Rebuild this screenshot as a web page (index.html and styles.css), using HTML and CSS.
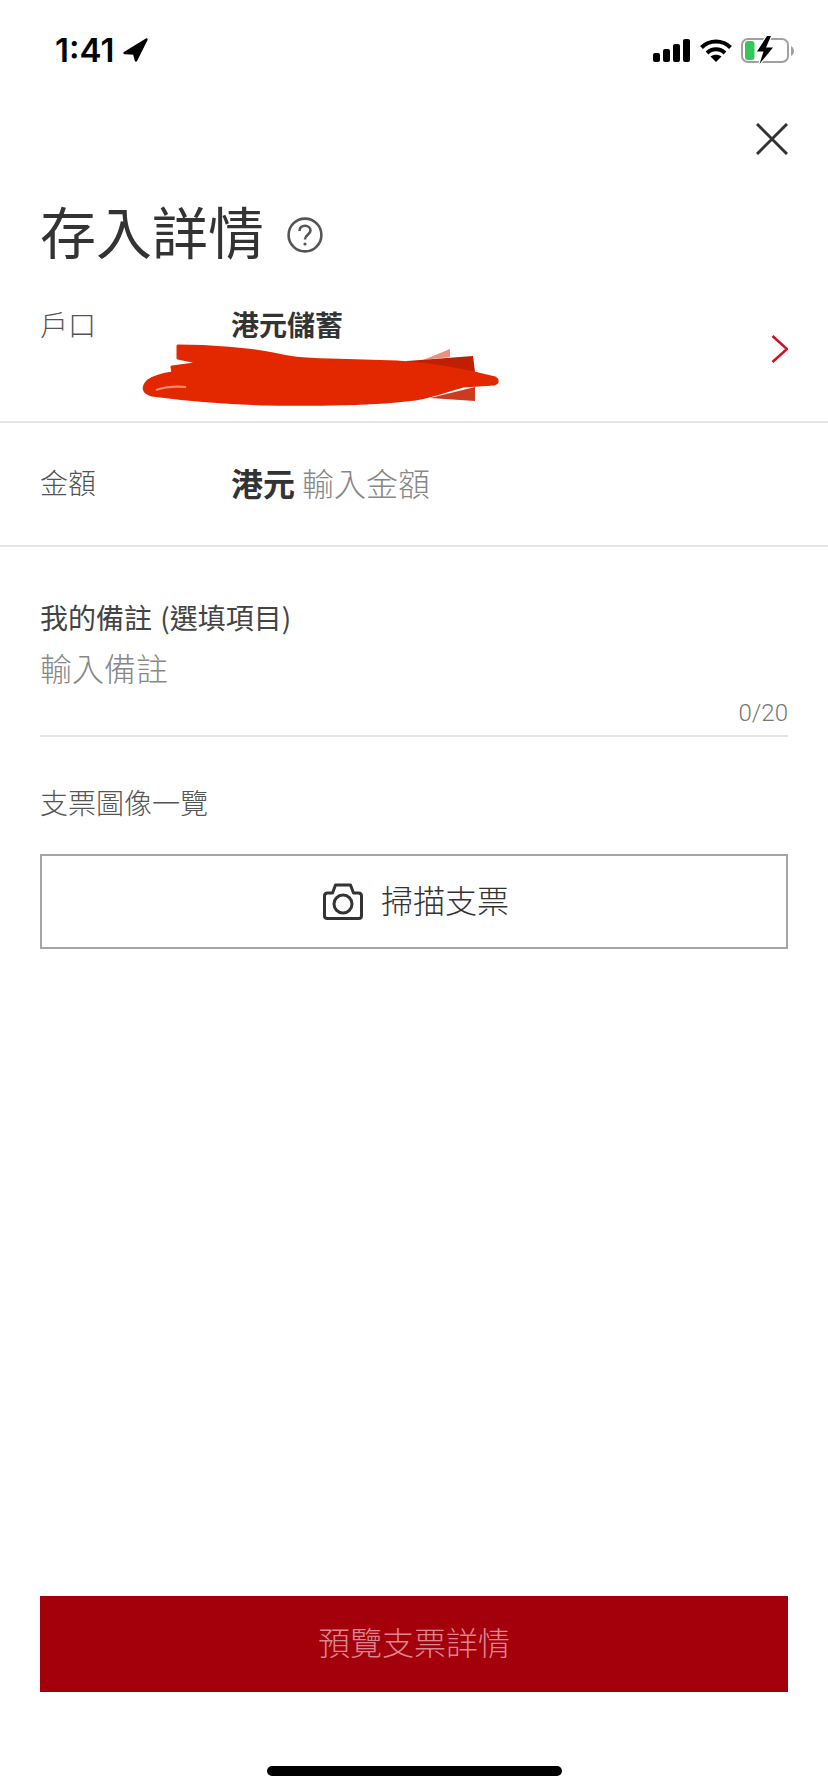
FILE: index.html
```html
<!DOCTYPE html>
<html>
<head>
    <title>存入詳情</title>
    <link rel="stylesheet" href="styles.css">
</head>
<body>
    <div class="page">
        <div class="status">
            <div class="clock">
                <span>1:41</span>
                <svg class="arrow" width="25" height="24" viewBox="0 0 25 24"><path d="M23.5 1.5 L13 22.5 L11 15.5 L1.5 15 Z" stroke="#000" stroke-width="2.4" stroke-linejoin="round"/></svg>
            </div>
            <div class="status-icons">
                <div class="signal"><i class="b1"></i><i class="b2"></i><i class="b3"></i><i class="b4"></i></div>
                <svg width="32" height="23" viewBox="0 0 32 23" fill="none" stroke="#000" stroke-width="4">
                    <path d="M1.5 8.5 C9.5 .5 22.5 .5 30.5 8.5"/>
                    <path d="M7 14 C12 9 20 9 25 14"/>
                    <path d="M16 23 L10.5 17.5 C13.5 15 18.5 15 21.5 17.5 Z" fill="#000" stroke="none"/>
                </svg>
                <svg width="53" height="28" viewBox="0 0 53 28">
                    <rect x="1" y="3" width="46" height="23" rx="6" fill="none" stroke="#a0a0a0" stroke-width="2"/>
                    <path d="M50 10 C52 11 53 13 53 15 C53 17 52 19 50 20 Z" fill="#a0a0a0"/>
                    <rect x="4" y="5" width="9.5" height="19" rx="3" fill="#34c759"/>
                    <path d="M26 0 L16 15.5 H22.5 L18.5 28 L32 11.5 H25 L30 0 Z" fill="#fff" stroke="#fff" stroke-width="2.5"/>
                    <path d="M26 0 L16 15.5 H22.5 L18.5 28 L32 11.5 H25 L30 0 Z" fill="#000"/>
                </svg>
            </div>
        </div>

        <div class="close-row">
            <svg width="32" height="32" viewBox="0 0 32 32" stroke="#333" stroke-width="3"><path d="M1 1 L31 31 M31 1 L1 31"/></svg>
        </div>

        <div class="title-row">
            <h1>存入詳情</h1>
            <svg class="help" width="36" height="36" viewBox="0 0 36 36" fill="none" stroke="#555" stroke-width="2.6">
                <circle cx="18" cy="18" r="16.4"/>
                <path d="M12.5 14 C12.5 10.5 15 8.8 18 8.8 C21 8.8 23.5 10.8 23.5 13.6 C23.5 17.5 18 17.6 18 22.5"/>
                <circle cx="18" cy="27" r="1.6" fill="#555" stroke="none"/>
            </svg>
        </div>

        <div class="row account">
            <span class="label">戶口</span>
            <span class="value">港元儲蓄</span>
            <svg class="chevron" width="18" height="28" viewBox="0 0 18 28" fill="none" stroke="#cf1322" stroke-width="2.6"><path d="M2.5 1 L17 14 L2.5 27"/></svg>
            <svg class="scribble" width="360" height="64" viewBox="0 0 360 64">
                <path class="ink-light" d="M283 17 L310 6 L310 14 Z"/>
                <path class="ink-dark" d="M267 18 L333 13 L335 29 L257 24 Z"/>
                <path class="ink-fade" d="M290 55 L335 44 L335 58 Z"/>
                <path class="ink" d="M38 3 C70 3 110 6 133 11 C150 15 160 16 190 17 L257 19 C290 21 320 26 355 35 C358 37 358 40 354 41 L323 43 C305 48 295 53 275 56 C240 61 170 62 123 61 C90 60 50 57 12 52 C3 50 2 44 8 38 C15 33 25 31 33 30 L32 24 L62 20 L38 15 Z"/>
                <path class="ink-gap" d="M16 47 C25 44 35 43 46 44"/>
            </svg>
        </div>

        <div class="row amount">
            <span class="label">金額</span>
            <span class="currency">港元</span>
            <span class="hint">輸入金額</span>
        </div>

        <div class="note">
            <div class="note-label">我的備註 (選填項目)</div>
            <div class="hint note-input">輸入備註</div>
            <div class="counter">0/20</div>
        </div>

        <div class="gallery-label">支票圖像一覽</div>
        <div class="scan-btn">
            <svg width="40" height="37" viewBox="0 0 40 37" fill="none" stroke="#333" stroke-width="3" stroke-linejoin="round">
                <path d="M4.5 10 H9.5 L12.5 2 H27.5 L30.5 10 H35.5 C37.5 10 38.5 11 38.5 13 V33 C38.5 35 37.5 35.5 35.5 35.5 H4.5 C2.5 35.5 1.5 35 1.5 33 V13 C1.5 11 2.5 10 4.5 10 Z"/>
                <circle cx="20" cy="21" r="9"/>
            </svg>
            <span>掃描支票</span>
        </div>

        <div class="spacer"></div>

        <div class="preview-btn">預覽支票詳情</div>
        <div class="home-bar"></div>
    </div>
</body>
</html>
```

FILE: styles.css
```css
body {
    margin: 0;
    background: #fff;
}
.page {
    width: 828px;
    height: 1792px;
    display: flex;
    flex-direction: column;
    font-family: "Noto Sans CJK TC", "Liberation Sans", sans-serif;
    font-weight: 300;
    color: #333;
    overflow: hidden;
}

/* status bar */
.status {
    height: 88px;
    display: flex;
    justify-content: space-between;
    padding: 0 34px 0 55px;
    box-sizing: border-box;
}
.clock {
    display: flex;
    align-items: center;
    height: 100px;
    gap: 9px;
    font-family: Inter, "Liberation Sans", sans-serif;
    font-size: 33px;
    font-weight: 600;
    color: #000;
}
.status-icons {
    display: flex;
    align-items: center;
    height: 100px;
    gap: 9px;
}
.signal {
    display: flex;
    align-items: flex-end;
    gap: 3px;
    height: 23px;
    margin-right: 1px;
}
.signal i {
    display: block;
    width: 7px;
    border-radius: 2px;
    background: #000;
}
.b1 { height: 9px; }
.b2 { height: 13px; }
.b3 { height: 18px; }
.b4 { height: 23px; }

.close-row {
    display: flex;
    justify-content: flex-end;
    padding: 35px 40px 0 0;
    height: 32px;
}
.title-row {
    display: flex;
    align-items: center;
    gap: 23px;
    padding: 0 0 0 40px;
    margin-top: 40px;
    height: 70px;
}
h1 {
    margin: 0;
    font-size: 56px;
    font-weight: 400;
    line-height: 70px;
}
.help {
    margin-top: 9px;
}

/* rows */
.row {
    display: flex;
    position: relative;
    border-bottom: 2px solid #e5e5e5;
    padding-left: 40px;
}
.label {
    width: 191px;
    font-size: 28px;
    color: #555;
    line-height: 48px;
}
.account {
    height: 121px;
    margin-top: 35px;
}
.value {
    font-size: 28px;
    font-weight: 700;
    line-height: 48px;
}
.chevron {
    position: absolute;
    right: 40px;
    top: 35px;
}
.scribble {
    position: absolute;
    left: 140px;
    top: 43px;
    filter: blur(.6px);
}
.ink { fill: #e32800; stroke: #e32800; stroke-width: 3; stroke-linejoin: round; }
.ink-dark { fill: #c01f00; }
.ink-fade { fill: #cc3a22; }
.ink-light { fill: #eb8f80; }
.ink-gap { stroke: #f08a70; stroke-width: 2; fill: none; }

.amount {
    height: 118px;
    padding-bottom: 4px;
    align-items: center;
}
.currency {
    font-size: 32px;
    font-weight: 700;
    margin-right: 7px;
}
.hint {
    font-size: 32px;
    color: #888;
}

/* note */
.note {
    margin: 50px 40px 0;
    border-bottom: 2px solid #e5e5e5;
    height: 138px;
}
.note-label {
    font-size: 28px;
    font-weight: 400;
    word-spacing: 2px;
    line-height: 40px;
    color: #444;
}
.note-input {
    line-height: 40px;
    margin-top: 10px;
}
.counter {
    font-family: Roboto, "Liberation Sans", sans-serif;
    font-size: 24px;
    line-height: 24px;
    margin-top: 14px;
    text-align: right;
    color: #777;
}

.gallery-label {
    margin: 45px 40px 0;
    font-size: 28px;
    line-height: 40px;
    color: #555;
}
.scan-btn {
    margin: 32px 40px 0;
    height: 95px;
    box-sizing: border-box;
    border: 2px solid #a5a5a5;
    padding-left: 4px;
    display: flex;
    align-items: center;
    justify-content: center;
    gap: 18px;
    font-size: 32px;
}
.scan-btn span {
    margin-bottom: 6px;
}
.spacer {
    flex: 1;
}
.preview-btn {
    margin: 0 40px;
    height: 96px;
    box-sizing: border-box;
    padding-bottom: 6px;
    flex: none;
    background: #a3000b;
    color: #dc8690;
    font-size: 32px;
    display: flex;
    align-items: center;
    justify-content: center;
}
.home-bar {
    flex: none;
    width: 295px;
    height: 10px;
    margin: 74px auto 16px;
    border-radius: 5px;
    background: #000;
}
```
